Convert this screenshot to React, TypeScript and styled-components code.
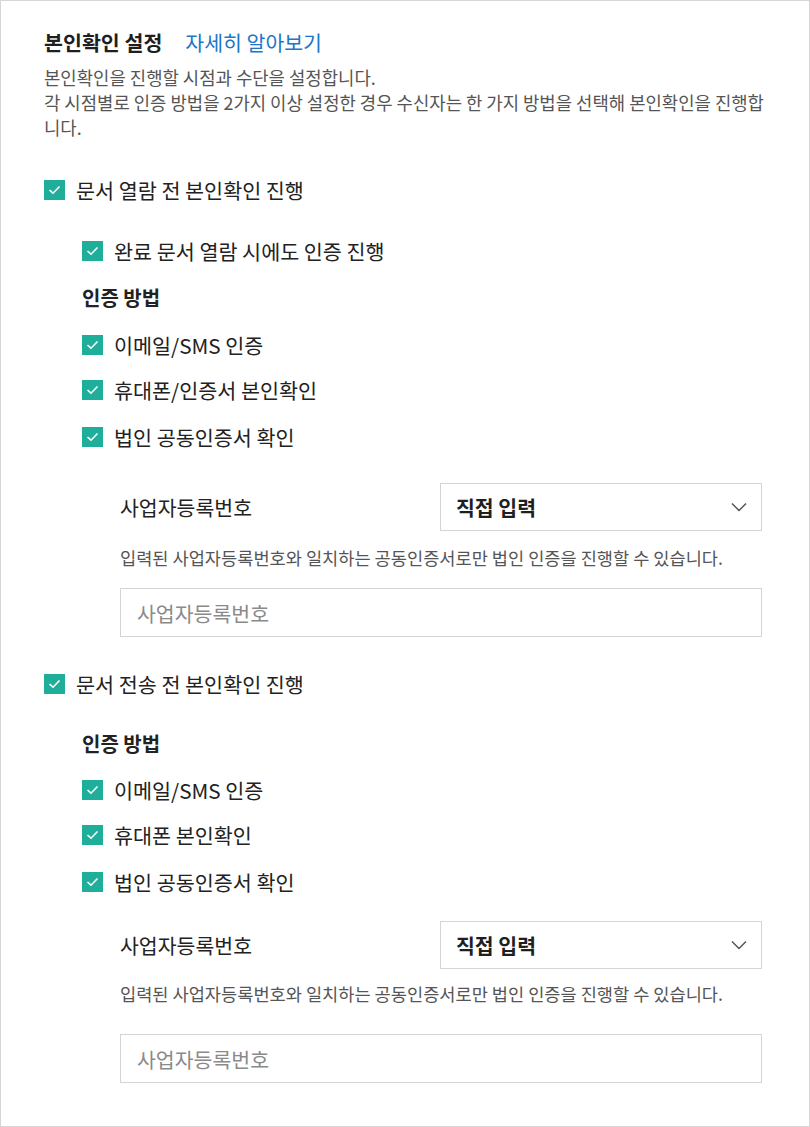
import React from 'react';
import styled, { createGlobalStyle } from 'styled-components';

const GlobalStyle = createGlobalStyle`
  body {
    margin: 0;
    background: #fff;
    font-family: "Noto Sans CJK KR", "Noto Sans", sans-serif;
    color: #222;
  }
  * {
    box-sizing: border-box;
  }
`;

const Frame = styled.div`
  width: 810px;
  height: 1127px;
  border: 1px solid #d6d6d6;
  padding: 29px 47px 0 43px;
  background: #fff;
`;

const TitleRow = styled.div`
  display: flex;
  align-items: center;
  gap: 23px;
  height: 24px;
`;

const Title = styled.h2`
  margin: 0;
  font-size: 20.6px;
  font-weight: 700;
  color: #1f1f1f;
  line-height: 24px;
`;

const MoreLink = styled.a`
  font-size: 20.5px;
  color: #1c76c9;
  text-decoration: none;
  line-height: 24px;
  cursor: pointer;
`;

const Description = styled.p`
  margin: 11px 0 0;
  font-size: 17.8px;
  line-height: 25px;
  color: #555;
  white-space: nowrap;
`;

const CheckRow = styled.label<{ $top: number }>`
  display: flex;
  align-items: center;
  gap: 11px;
  height: 24px;
  margin-top: ${(p) => p.$top}px;
  font-size: 20.7px;
  color: #222;
  cursor: pointer;
`;

const Box = styled.span`
  display: flex;
  align-items: center;
  justify-content: center;
  width: 21px;
  height: 20px;
  background: #1fae99;
  flex-shrink: 0;
`;

const Nested = styled.div`
  padding-left: 38px;
`;

const GroupLabel = styled.div<{ $top: number }>`
  margin-top: ${(p) => p.$top}px;
  height: 24px;
  line-height: 24px;
  font-size: 20px;
  font-weight: 700;
  color: #222;
`;

const BizBlock = styled.div<{ $top: number }>`
  margin-top: ${(p) => p.$top}px;
  padding-left: 38px;
`;

const BizRow = styled.div`
  display: grid;
  grid-template-columns: 320px 1fr;
  align-items: center;
`;

const BizLabel = styled.div`
  font-size: 20.5px;
  color: #222;
`;

const Select = styled.div`
  display: flex;
  align-items: center;
  justify-content: space-between;
  height: 48px;
  padding: 0 14px 0 15px;
  border: 1px solid #d4d4d4;
  font-size: 20.5px;
  font-weight: 700;
  color: #1f1f1f;
  background: #fff;
`;

const Helper = styled.p<{ $top: number }>`
  margin: ${(p) => p.$top}px 0 0;
  font-size: 17.6px;
  line-height: 20px;
  color: #555;
  white-space: nowrap;
`;

const TextInput = styled.input<{ $top: number }>`
  display: block;
  width: 100%;
  height: 49px;
  margin-top: ${(p) => p.$top}px;
  padding: 0 16px;
  border: 1px solid #d4d4d4;
  font-family: "Noto Sans CJK KR", "Noto Sans", sans-serif;
  font-size: 20.5px;
  color: #222;
  outline: none;
  &::placeholder {
    color: #8a8a8a;
  }
`;

const Check = () => (
  <Box>
    <svg width="13" height="10" viewBox="0 0 13 10" fill="none">
      <path d="M1.5 5l3.5 3.2L11.5 1.5" stroke="#fff" strokeWidth="1.6" />
    </svg>
  </Box>
);

const Chevron = () => (
  <svg width="16" height="10" viewBox="0 0 16 10" fill="none">
    <path d="M1 1.5l7 7 7-7" stroke="#555" strokeWidth="1.5" />
  </svg>
);

type BizProps = { top: number; helperTop: number; inputTop: number };

const BizNumber = ({ top, helperTop, inputTop }: BizProps) => (
  <BizBlock $top={top}>
    <BizRow>
      <BizLabel>사업자등록번호</BizLabel>
      <Select>
        직접 입력
        <Chevron />
      </Select>
    </BizRow>
    <Helper $top={helperTop}>
      입력된 사업자등록번호와 일치하는 공동인증서로만 법인 인증을 진행할 수 있습니다.
    </Helper>
    <TextInput $top={inputTop} placeholder="사업자등록번호" />
  </BizBlock>
);

const App = () => {
  return (
    <>
      <GlobalStyle />
      <Frame>
        <TitleRow>
          <Title>본인확인 설정</Title>
          <MoreLink>자세히 알아보기</MoreLink>
        </TitleRow>
        <Description>
          본인확인을 진행할 시점과 수단을 설정합니다.
          <br />각 시점별로 인증 방법을 2가지 이상 설정한 경우 수신자는 한 가지 방법을 선택해 본인확인을 진행합
          <br />니다.
        </Description>

        <CheckRow $top={38}>
          <Check />
          문서 열람 전 본인확인 진행
        </CheckRow>
        <Nested>
          <CheckRow $top={37}>
            <Check />
            완료 문서 열람 시에도 인증 진행
          </CheckRow>
          <GroupLabel $top={23}>인증 방법</GroupLabel>
          <CheckRow $top={23}>
            <Check />
            이메일/SMS 인증
          </CheckRow>
          <CheckRow $top={21}>
            <Check />
            휴대폰/인증서 본인확인
          </CheckRow>
          <CheckRow $top={23}>
            <Check />
            법인 공동인증서 확인
          </CheckRow>
          <BizNumber top={34} helperTop={17} inputTop={20} />
        </Nested>

        <CheckRow $top={35}>
          <Check />
          문서 전송 전 본인확인 진행
        </CheckRow>
        <Nested>
          <GroupLabel $top={36}>인증 방법</GroupLabel>
          <CheckRow $top={22}>
            <Check />
            이메일/SMS 인증
          </CheckRow>
          <CheckRow $top={21}>
            <Check />
            휴대폰 본인확인
          </CheckRow>
          <CheckRow $top={23}>
            <Check />
            법인 공동인증서 확인
          </CheckRow>
          <BizNumber top={27} helperTop={15} inputTop={30} />
        </Nested>
      </Frame>
    </>
  );
};

export default App;
